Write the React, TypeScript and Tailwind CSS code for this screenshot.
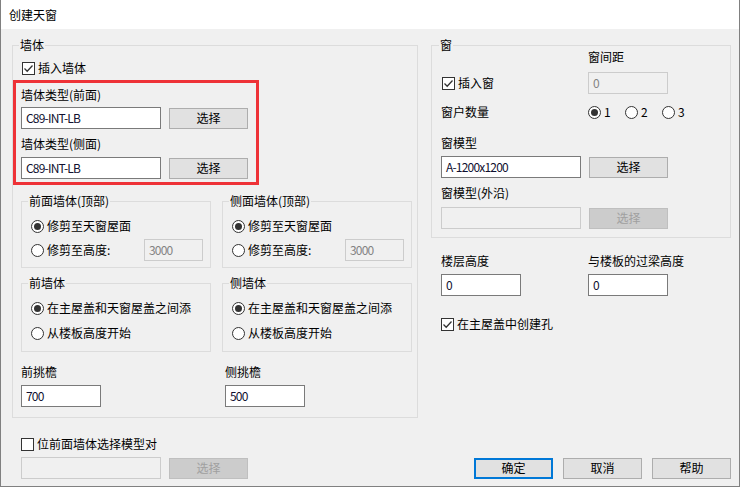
const font = { fontFamily: '"Noto Sans CJK SC", "Noto Sans", sans-serif' };

const Check = ({ checked }: { checked?: boolean }) => (
  <span className="flex h-[13px] w-[13px] shrink-0 items-center justify-center border border-[#333333] bg-white">
    {checked && (
      <svg width="11" height="11" viewBox="0 0 11 11">
        <path d="M1.5 5.5 L4.2 8.2 L9.5 2.5" fill="none" stroke="#333333" strokeWidth="1.3" />
      </svg>
    )}
  </span>
);

const Radio = ({ checked }: { checked?: boolean }) => (
  <span className="flex h-[13px] w-[13px] shrink-0 items-center justify-center rounded-full border border-[#333333] bg-white">
    {checked && <span className="h-[7px] w-[7px] rounded-full bg-[#333333]" />}
  </span>
);

const Input = ({ value, w, disabled }: { value?: string; w: string; disabled?: boolean }) => (
  <div
    className={`flex h-[22px] ${w} shrink-0 items-center border px-[4px] pb-px text-[12px] leading-4 tracking-[-0.8px] ${
      disabled ? "border-[#cccccc] bg-[#f0f0f0] text-[#838383]" : "border-[#7a7a7a] bg-white text-[#101030]"
    }`}
  >
    {value}
  </div>
);

const Button = ({ label, disabled, primary }: { label: string; disabled?: boolean; primary?: boolean }) => (
  <div
    className={`flex h-[21px] w-[79px] shrink-0 items-center justify-center text-[12px] leading-4 ${
      disabled
        ? "border border-[#bfbfbf] bg-[#cccccc] text-[#a0a0a0]"
        : primary
        ? "border-2 border-[#0078d7] bg-[#e1e1e1] text-black"
        : "border border-[#adadad] bg-[#e1e1e1] text-black"
    }`}
  >
    {label}
  </div>
);

const Label = ({ text }: { text: string }) => <div className="h-4 text-[12px] leading-4">{text}</div>;

const Group = ({ title, children, className }: { title: string; children: React.ReactNode; className?: string }) => (
  <fieldset className={`m-0 border border-[#dcdcdc] p-0 ${className ?? ""}`}>
    <legend className="ml-[6px] px-px text-[12px] leading-4">{title}</legend>
    {children}
  </fieldset>
);

export default function App() {
  return (
    <div style={font} className="relative flex h-[487px] w-[740px] flex-col border-x border-b border-[#808080] bg-[#f0f0f0] text-black">
      <div className="flex h-[29px] shrink-0 items-center bg-white pl-[8px] text-[12px] leading-4">创建天窗</div>

      <div className="flex pl-[11px] pt-[8px]">
        {/* 墙体 */}
        <Group title="墙体" className="h-[381px] w-[406px]">
          <div className="flex flex-col pl-[8px]">
            <div className="mt-[7px] flex h-4 items-center gap-[3px] pl-px text-[12px] leading-4">
              <Check checked />
              插入墙体
            </div>
            <div className="mt-[11px]">
              <Label text="墙体类型(前面)" />
            </div>
            <div className="mt-[4px] flex items-center gap-[8px]">
              <Input value="C89-INT-LB" w="w-[140px]" />
              <Button label="选择" />
            </div>
            <div className="mt-[7px]">
              <Label text="墙体类型(侧面)" />
            </div>
            <div className="mt-[5px] flex items-center gap-[8px]">
              <Input value="C89-INT-LB" w="w-[140px]" />
              <Button label="选择" />
            </div>

            <div className="mt-[14px] flex gap-[11px]">
              {["前面墙体(顶部)", "侧面墙体(顶部)"].map((t) => (
                <Group key={t} title={t} className="w-[190px]">
                  <div className="flex flex-col pb-[6px] pl-[9px] pr-[7px]">
                    <div className="mt-[9px] flex h-4 items-center gap-[3px] text-[12px] leading-4">
                      <Radio checked />
                      修剪至天窗屋面
                    </div>
                    <div className="mt-[5px] flex h-[22px] items-center gap-[3px] text-[12px] leading-4">
                      <Radio />
                      修剪至高度:
                      <div className="ml-auto">
                        <Input value="3000" w="w-[59px]" disabled />
                      </div>
                    </div>
                  </div>
                </Group>
              ))}
            </div>

            <div className="mt-[7px] flex gap-[11px]">
              {["前墙体", "侧墙体"].map((t) => (
                <Group key={t} title={t} className="w-[190px]">
                  <div className="flex flex-col pb-[10px] pl-[9px]">
                    <div className="mt-[9px] flex h-4 items-center gap-[3px] text-[12px] leading-4">
                      <Radio checked />
                      在主屋盖和天窗屋盖之间添
                    </div>
                    <div className="mt-[9px] flex h-4 items-center gap-[3px] text-[12px] leading-4">
                      <Radio />
                      从楼板高度开始
                    </div>
                  </div>
                </Group>
              ))}
            </div>

            <div className="mt-[12px] flex">
              <div className="flex w-[204px] flex-col gap-[5px]">
                <Label text="前挑檐" />
                <Input value="700" w="w-[80px]" />
              </div>
              <div className="flex flex-col gap-[5px]">
                <Label text="侧挑檐" />
                <Input value="500" w="w-[80px]" />
              </div>
            </div>
          </div>
        </Group>

        {/* 窗 */}
        <div className="ml-[13px] flex w-[300px] flex-col">
          <fieldset className="m-0 h-[201px] border border-[#dcdcdc] p-0">
            <legend className="ml-[7px] px-px text-[12px] leading-4">窗</legend>
            <div className="flex flex-col pl-[9px]">
              <div className="-mt-[4px] flex">
                <div className="w-[147px]" />
                <Label text="窗间距" />
              </div>
              <div className="mt-[7px] flex h-[22px] items-center">
                <div className="flex w-[147px] items-center gap-[3px] pl-px text-[12px] leading-4">
                  <Check checked />
                  插入窗
                </div>
                <Input value="0" w="w-[80px]" disabled />
              </div>
              <div className="mt-[10px] flex h-4 items-center text-[12px] leading-4">
                <div className="w-[147px]">窗户数量</div>
                <div className="flex items-center gap-[3px]">
                  <Radio checked />
                  <span className="w-[18px]">1</span>
                  <Radio />
                  <span className="w-[18px]">2</span>
                  <Radio />
                  <span>3</span>
                </div>
              </div>
              <div className="mt-[15px]">
                <Label text="窗模型" />
              </div>
              <div className="mt-[5px] flex items-center gap-[8px]">
                <Input value="A-1200x1200" w="w-[140px]" />
                <Button label="选择" />
              </div>
              <div className="mt-[7px]">
                <Label text="窗模型(外沿)" />
              </div>
              <div className="mt-[6px] flex items-center gap-[8px]">
                <Input w="w-[140px]" disabled />
                <Button label="选择" disabled />
              </div>
            </div>
          </fieldset>

          <div className="flex flex-col pl-[10px]">
            <div className="mt-[15px] flex">
              <div className="flex w-[147px] flex-col gap-[5px]">
                <Label text="楼层高度" />
                <Input value="0" w="w-[80px]" />
              </div>
              <div className="flex flex-col gap-[5px]">
                <Label text="与楼板的过梁高度" />
                <Input value="0" w="w-[80px]" />
              </div>
            </div>
            <div className="mt-[20px] flex h-4 items-center gap-[3px] text-[12px] leading-4">
              <Check checked />
              在主屋盖中创建孔
            </div>
          </div>
        </div>
      </div>

      <div className="flex flex-col pl-[20px] pr-[8px]">
        <div className="mt-[18px] flex h-4 items-center gap-[3px] text-[12px] leading-4">
          <Check />
          位前面墙体选择模型对
        </div>
        <div className="mt-[5px] flex items-center">
          <Input w="w-[140px]" disabled />
          <div className="ml-[8px]">
            <Button label="选择" disabled />
          </div>
          <div className="ml-auto flex gap-[10px]">
            <Button label="确定" primary />
            <Button label="取消" />
            <Button label="帮助" />
          </div>
        </div>
      </div>

      {/* annotation highlight */}
      <div className="pointer-events-none absolute left-[12px] top-[80px] h-[105px] w-[246px] border-[3px] border-[#ee3237]" />
    </div>
  );
}
